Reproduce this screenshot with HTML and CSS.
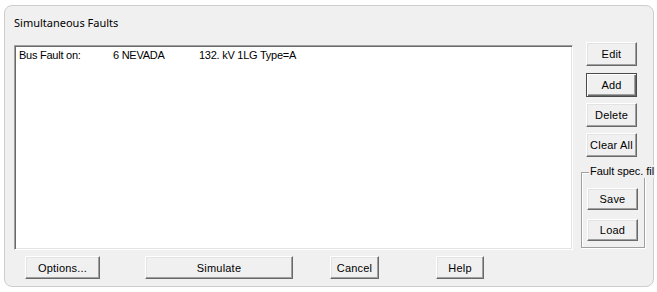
FILE: index.html
```html
<!DOCTYPE html>
<html>
<head>
<meta charset="utf-8">
<link rel="stylesheet" href="styles.css">
</head>
<body>
<div class="window">
  <div class="title">Simultaneous Faults</div>
  <div class="main">
    <div class="listbox">
      <div class="row">
        <span>Bus Fault on:</span>
        <span>6 NEVADA</span>
        <span>132. kV 1LG Type=A</span>
      </div>
    </div>
    <div class="side">
      <button class="btn side-btn">Edit</button>
      <button class="btn side-btn default gap7">Add</button>
      <button class="btn side-btn gap6">Delete</button>
      <button class="btn side-btn gap6">Clear All</button>
      <div class="group">
        <span class="group-label">Fault spec. fil</span>
        <button class="btn group-btn first">Save</button>
        <button class="btn group-btn second">Load</button>
      </div>
    </div>
  </div>
  <div class="bottom">
    <button class="btn b-options">Options...</button>
    <button class="btn b-simulate">Simulate</button>
    <button class="btn b-cancel">Cancel</button>
    <button class="btn b-help">Help</button>
  </div>
</div>
</body>
</html>
```
FILE: styles.css
```css
* { box-sizing: border-box; }
html, body { margin: 0; padding: 0; overflow: hidden; background: #ffffff; }
body { width: 657px; height: 292px; }

.window {
  margin: 5px 0 0 4px;
  width: 650px;
  height: 282px;
  border: 1px solid #cdcdcd;
  border-radius: 8px;
  background: #f0f0f0;
  display: flex;
  flex-direction: column;
}

.title {
  height: 36px;
  padding: 9px 0 0 9px;
  font-family: "Noto Sans", "Open Sans", sans-serif;
  font-size: 11px;
  line-height: 15px;
  color: #000;
}

.main {
  display: flex;
  align-items: flex-start;
  height: 208px;
}

.listbox {
  margin: 3px 0 0 9px;
  width: 559px;
  height: 205px;
  background: #ffffff;
  border: 1px solid;
  border-color: #a0a0a0 #ffffff #ffffff #a0a0a0;
  box-shadow: inset 1px 1px #696969, inset -1px -1px #e3e3e3;
  padding: 3px 0 0 4px;
}

.row {
  display: grid;
  grid-template-columns: 94px 86px auto;
  font-family: "Liberation Sans", Arial, sans-serif;
  font-size: 11px;
  line-height: 13px;
  letter-spacing: -0.25px;
  color: #000;
}

.side {
  margin-left: 8px;
  display: flex;
  flex-direction: column;
  align-items: flex-start;
}

.btn {
  display: block;
  margin: 0;
  padding: 0;
  background: #f0f0f0;
  border: 1px solid;
  border-color: #ffffff #696969 #696969 #ffffff;
  box-shadow: inset -1px -1px #a0a0a0, inset 1px 1px #e3e3e3;
  font-family: "Liberation Sans", Arial, sans-serif;
  font-size: 11px;
  letter-spacing: 0.2px;
  color: #000;
  text-align: center;
}

.side-btn {
  margin-left: 5px;
  width: 51px;
  height: 24px;
}
.gap7 { margin-top: 7px; }
.gap6 { margin-top: 6px; }

.default {
  border-color: #4a4a4a;
  box-shadow: inset 1px 1px #ffffff, inset -1px -1px #696969, inset -2px -2px #a0a0a0;
}

.group {
  position: relative;
  margin-top: 15px;
  width: 64px;
  height: 76px;
  border: 1px solid #a0a0a0;
  box-shadow: inset 1px 1px #ffffff, 1px 1px #ffffff;
}

.group-label {
  position: absolute;
  top: -8px;
  left: 7px;
  padding: 0 1px;
  background: #f0f0f0;
  white-space: nowrap;
  font-family: "Liberation Sans", Arial, sans-serif;
  font-size: 11px;
  line-height: 13px;
  letter-spacing: -0.05px;
  color: #000;
}

.group-btn {
  margin-left: 5px;
  width: 51px;
  height: 22px;
}
.group-btn.first { margin-top: 15px; }
.group-btn.second { margin-top: 9px; }

.bottom {
  display: flex;
  margin-top: 6px;
}
.bottom .btn { height: 23px; }
.b-options { margin-left: 20px; width: 75px; }
.b-simulate { margin-left: 45px; width: 148px; }
.b-cancel { margin-left: 37px; width: 49px; }
.b-help { margin-left: 57px; width: 48px; }
```
